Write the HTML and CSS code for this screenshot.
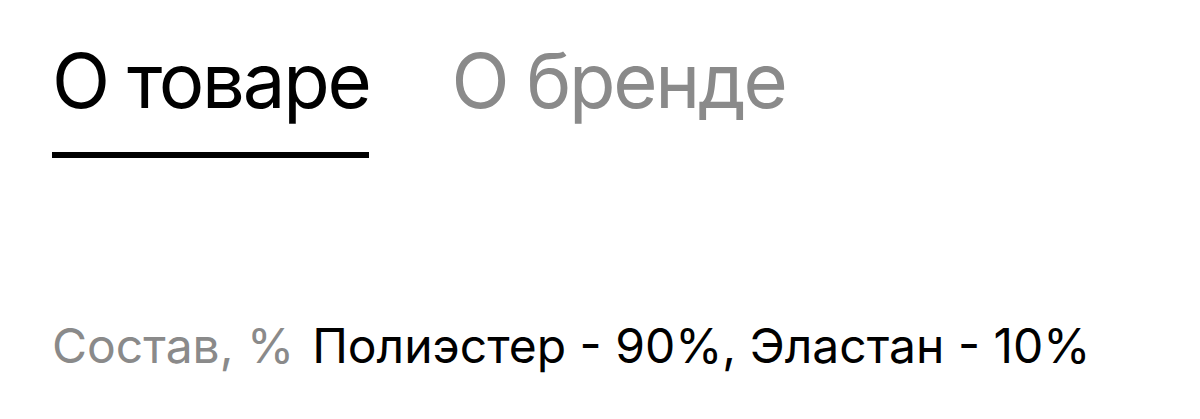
FILE: index.html
```html
<!DOCTYPE html>
<html lang="ru">

<head>
  <meta charset="UTF-8">
  <meta name="viewport" content="width=device-width, initial-scale=1.0">
  <title>О товаре</title>
  <link rel="stylesheet" href="styles.css">
</head>

<body>
  <main class="product">
    <nav class="tabs">
      <a class="tabs__item tabs__item--active" href="#about">О товаре</a>
      <a class="tabs__item" href="#brand">О бренде</a>
    </nav>

    <dl class="params">
      <div class="params__row">
        <dt class="params__name">Состав, %</dt>
        <dd class="params__value">Полиэстер - 90%, Эластан - 10%</dd>
      </div>
    </dl>
  </main>
</body>

</html>
```

FILE: styles.css
```css
body {
  margin: 0;
  font-family: 'Inter', 'Noto Sans', sans-serif;
  background-color: #ffffff;
  color: #000000;
}

.product {
  padding: 0 52px;
}

.tabs {
  display: flex;
  gap: 82px;
  padding-top: 32px;
}

.tabs__item {
  display: block;
  padding-bottom: 24px;
  border-bottom: 6px solid transparent;
  font-size: 76px;
  line-height: 96px;
  letter-spacing: -0.03em;
  color: #8a8a8a;
  text-decoration: none;
}

.tabs__item--active {
  color: #000000;
  border-bottom-color: #000000;
}

.params {
  margin: 158px 0 0;
}

.params__row {
  display: flex;
  gap: 18px;
  align-items: baseline;
}

.params__name,
.params__value {
  margin: 0;
  font-size: 48px;
  line-height: 60px;
}

.params__name {
  color: #8a8a8a;
}
```
